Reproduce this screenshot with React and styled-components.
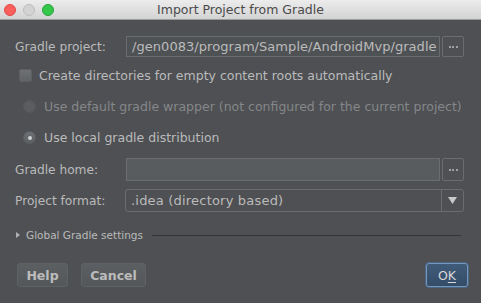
import React from "react";
import styled, { createGlobalStyle } from "styled-components";

const Global = createGlobalStyle`
  html, body { margin: 0; padding: 0; background: #4e5053; }
  body { font-family: "DejaVu Sans", "Liberation Sans", sans-serif; }
`;

const Window = styled.div`
  width: 481px;
  height: 303px;
  background: #4e5053;
  display: flex;
  flex-direction: column;
  overflow: hidden;
  font-size: 12px;
  color: #bbbbbb;
`;

const TitleBar = styled.div`
  height: 19px;
  border-bottom: 1px solid #9c9c9c;
  background: linear-gradient(#ececec, #d3d3d3);
  display: flex;
  align-items: center;
  position: relative;
`;

const Lights = styled.div`
  display: flex;
  gap: 7px;
  padding-left: 4px;
`;

const Light = styled.span`
  width: 12px;
  height: 12px;
  border-radius: 50%;
  background: ${(p) => p.$c};
  border: 0.5px solid ${(p) => p.$b};
  box-sizing: border-box;
`;

const Title = styled.div`
  position: absolute;
  left: 0;
  right: 0;
  text-align: center;
  font-size: 12.5px;
  color: #4a4a4a;
`;

const Body = styled.div`
  display: flex;
  flex-direction: column;
  padding: 16px 17px 0 15px;
`;

const FieldRow = styled.div`
  display: grid;
  grid-template-columns: 109px 1fr 22px;
  column-gap: 2px;
  height: ${(p) => p.$h || 22}px;
  margin-top: ${(p) => p.$mt || 0}px;
  align-items: stretch;
`;

const Label = styled.div`
  display: flex;
  align-items: center;
  white-space: nowrap;
  font-size: 12.2px;
`;

const TextField = styled.div`
  border: 1px solid #6a6c6e;
  background: ${(p) => (p.$disabled ? "#595c5f" : "#4f5255")};
  display: flex;
  align-items: center;
  padding-left: 5px;
  overflow: hidden;
  white-space: nowrap;
  color: #bbbbbb;
  font-size: 13px;
  letter-spacing: 0.05px;
`;

const BrowseButton = styled.div`
  border: 1px solid #6a6c6e;
  border-radius: 2px;
  display: flex;
  align-items: center;
  justify-content: center;
  gap: 1.5px;
`;

const Dot = styled.span`
  width: 2px;
  height: 2px;
  background: #a0a0a0;
`;

const CheckRow = styled.div`
  display: flex;
  align-items: center;
  height: ${(p) => p.$h}px;
  margin-top: ${(p) => p.$mt || 0}px;
  padding-left: ${(p) => p.$pl}px;
  gap: ${(p) => p.$gap}px;
  color: ${(p) => (p.$disabled ? "#85878a" : "#bbbbbb")};
  white-space: nowrap;
  font-size: 12.5px;
`;

const CheckBox = styled.span`
  width: 13px;
  height: 13px;
  flex: none;
  box-sizing: border-box;
  border-radius: 2px;
  border: 1px solid #5d5f61;
  background: linear-gradient(#6e7073, #606366);
`;

const Radio = styled.span`
  width: 13px;
  height: 13px;
  flex: none;
  box-sizing: border-box;
  border-radius: 50%;
  border: 1px solid ${(p) => (p.$disabled ? "#56585b" : "#5e6064")};
  background: ${(p) =>
    p.$disabled ? "#5a5c5f" : "linear-gradient(#6d7074, #5c5f62)"};
  display: flex;
  align-items: center;
  justify-content: center;
  &::after {
    content: "";
    display: ${(p) => (p.$checked ? "block" : "none")};
    width: 4px;
    height: 4px;
    border-radius: 50%;
    background: #d0d0d0;
  }
`;

const Combo = styled.div`
  grid-column: 2 / 4;
  margin-left: -1px;
  border: 1px solid #6a6c6e;
  border-radius: 3px;
  display: flex;
  align-items: stretch;
  background: #4e5053;
`;

const ComboText = styled.div`
  flex: 1;
  display: flex;
  align-items: center;
  padding-left: 5px;
  color: #bbbbbb;
  font-size: 13px;
  letter-spacing: 0.2px;
`;

const ComboArrow = styled.div`
  width: 21px;
  border-left: 1px solid #6a6c6e;
  display: flex;
  align-items: center;
  justify-content: center;
`;

const SectionRow = styled.div`
  display: flex;
  align-items: center;
  height: 24px;
  margin-top: 11px;
  gap: 6px;
  padding-left: 1px;
  white-space: nowrap;
`;

const Arrow = styled.span`
  width: 0;
  height: 0;
  border-top: 3px solid transparent;
  border-bottom: 3px solid transparent;
  border-left: 4px solid #b0b0b0;
`;

const SectionText = styled.span`
  font-size: 10.5px;
  color: #bbbbbb;
`;

const Divider = styled.div`
  flex: 1;
  height: 1px;
  background: #333436;
  margin-left: 3px;
  margin-right: 3px;
`;

const ButtonBar = styled.div`
  display: flex;
  align-items: center;
  margin-top: 16px;
  padding-left: 2px;
  gap: 13px;
`;

const Button = styled.div`
  height: 24px;
  width: ${(p) => p.$w}px;
  box-sizing: border-box;
  border-radius: 3px;
  border: 1px solid #5f6265;
  background: linear-gradient(#5c5f62, #54575a);
  color: #bcbcbc;
  font-weight: bold;
  font-size: 12.5px;
  display: flex;
  align-items: center;
  justify-content: center;
`;

const OkButton = styled(Button)`
  margin-left: auto;
  margin-right: -4px;
  border: 1px solid #7597bd;
  background: linear-gradient(#405b79, #344c68);
  box-shadow: 0 0 0 1px #4a6788;
  color: #d8d8d8;
  font-weight: normal;
  & u { text-decoration-thickness: 1px; text-underline-offset: 2px; }
`;

export default function App() {
  return (
    <>
      <Global />
      <Window>
        <TitleBar>
          <Lights>
            <Light $c="#fc605c" $b="#de4a47" />
            <Light $c="#d3d3d3" $b="#bdbdbd" />
            <Light $c="#34c84a" $b="#2aa13b" />
          </Lights>
          <Title>Import Project from Gradle</Title>
        </TitleBar>
        <Body>
          <FieldRow $h={21}>
            <Label>Gradle project:</Label>
            <TextField>/gen0083/program/Sample/AndroidMvp/gradle</TextField>
            <BrowseButton>
              <Dot />
              <Dot />
              <Dot />
            </BrowseButton>
          </FieldRow>
          <CheckRow $h={31} $mt={3} $pl={4} $gap={7}>
            <CheckBox />
            Create directories for empty content roots automatically
          </CheckRow>
          <CheckRow $h={31} $pl={8} $gap={8} $disabled>
            <Radio $disabled />
            Use default gradle wrapper (not configured for the current project)
          </CheckRow>
          <CheckRow $h={31} $pl={8} $gap={8}>
            <Radio $checked />
            Use local gradle distribution
          </CheckRow>
          <FieldRow $h={23} $mt={5}>
            <Label>Gradle home:</Label>
            <TextField $disabled />
            <BrowseButton>
              <Dot />
              <Dot />
              <Dot />
            </BrowseButton>
          </FieldRow>
          <FieldRow $h={23} $mt={8}>
            <Label>Project format:</Label>
            <Combo>
              <ComboText>.idea (directory based)</ComboText>
              <ComboArrow>
                <svg width="9" height="7" viewBox="0 0 9 7">
                  <path d="M0 0 L9 0 L4.5 7 Z" fill="#c8c8c8" />
                </svg>
              </ComboArrow>
            </Combo>
          </FieldRow>
          <SectionRow>
            <Arrow />
            <SectionText>Global Gradle settings</SectionText>
            <Divider />
          </SectionRow>
          <ButtonBar>
            <Button $w={51}>Help</Button>
            <Button $w={65}>Cancel</Button>
            <OkButton $w={42}>
              O<u>K</u>
            </OkButton>
          </ButtonBar>
        </Body>
      </Window>
    </>
  );
}
